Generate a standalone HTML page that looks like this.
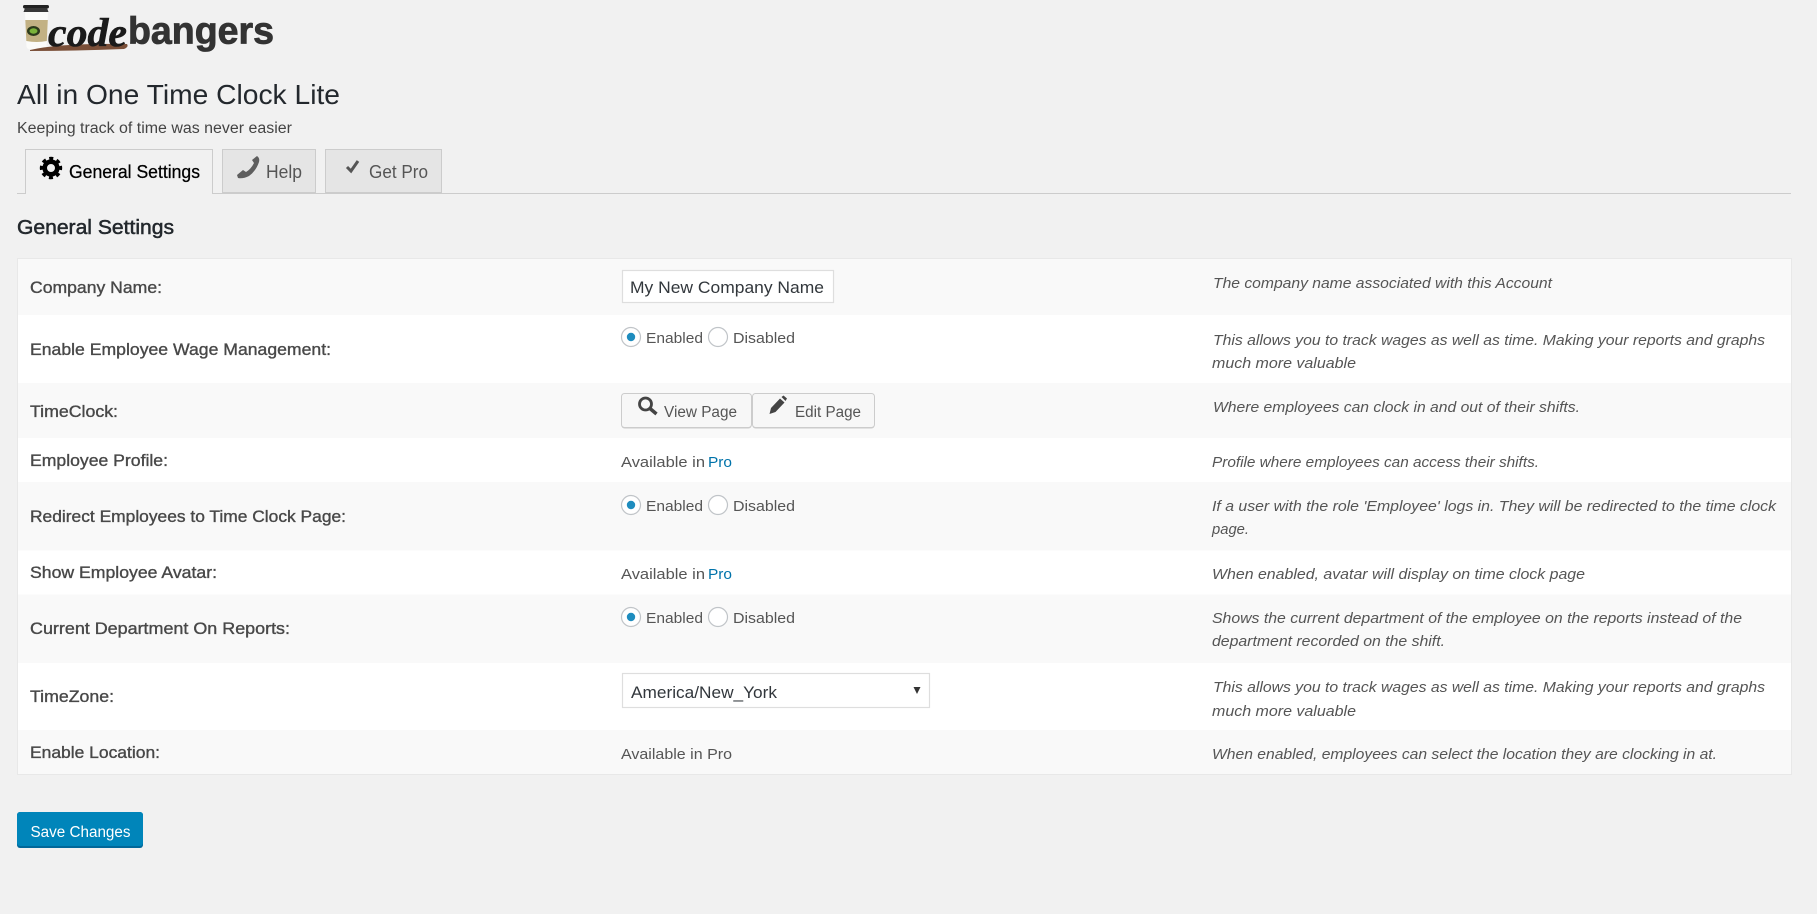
<!DOCTYPE html>
<html lang="en"><head><meta charset="utf-8"><title>All in One Time Clock Lite</title>
<style>
html,body{margin:0;padding:0;background:#f1f1f1;width:1817px;height:914px;overflow:hidden}
svg{display:block}
text{font-family:"Liberation Sans",sans-serif;font-size:15.6px;fill:#555;white-space:pre}
.l{fill:#484848;stroke:#484848;stroke-width:.35;font-size:16.2px}
.d{font-style:italic;font-size:15.2px}
.v{font-size:15.2px}
</style></head><body>
<svg width="1817" height="914" viewBox="0 0 1817 914" xmlns="http://www.w3.org/2000/svg">
<rect width="1817" height="914" fill="#f1f1f1"/>

<!-- logo -->
<path d="M25 12h23l-1.500 35q-1 3-8 3h-4q-7 0-8-3z" fill="#fbfbf9"/>
<path d="M25.300 20h22.500l-1 21q-10 2-20.500 0z" fill="#c2b184"/>
<ellipse cx="33.500" cy="31" rx="6.500" ry="5" fill="#2c3a1c"/><ellipse cx="33.500" cy="31" rx="4" ry="2.700" fill="#7ab33a"/>
<rect x="23" y="5" width="26" height="3.500" rx="1.700" fill="#222"/><path d="M25 8h22l1.500 4h-25z" fill="#383838"/>
<path d="M30 50q30-7 97-6q2 3-3 5q-50 2-94 2z" fill="#7a4f38"/>
<text x="48" y="46" textLength="79" lengthAdjust="spacingAndGlyphs" style="font-family:'Liberation Serif',serif;font-size:40px;font-style:italic;font-weight:bold;fill:#1a1a1a;stroke:#1a1a1a;stroke-width:.6">code</text>
<text x="128" y="43.500" textLength="146" lengthAdjust="spacingAndGlyphs" style="font-size:38px;font-weight:bold;fill:#333;stroke:#333;stroke-width:.8">bangers</text>

<!-- header -->
<text x="17" y="104" textLength="323" lengthAdjust="spacingAndGlyphs" style="font-size:28px;fill:#23282d">All in One Time Clock Lite</text>
<text x="17" y="133" textLength="275" lengthAdjust="spacingAndGlyphs" style="font-size:15.5px;fill:#444">Keeping track of time was never easier</text>

<!-- tabs -->
<rect x="17" y="193" width="1774" height="1" fill="#ccc"/>
<path d="M25.500 194V149.500H212.500V194" fill="#f1f1f1" stroke="#ccc"/>
<rect x="26" y="192" width="186" height="3" fill="#f1f1f1"/>
<rect x="222.500" y="149.500" width="93" height="43" fill="#e5e5e5" stroke="#ccc"/>
<rect x="325.500" y="149.500" width="116" height="43" fill="#e5e5e5" stroke="#ccc"/>

<g fill="none" stroke="#000">
<circle cx="51" cy="168" r="6.300" stroke-width="4.600"/>
<circle cx="51" cy="168" r="9.500" stroke-width="3.400" stroke-dasharray="3.900 3.560" transform="rotate(-12 51 168)"/>
</g>
<text x="69" y="178" textLength="131" lengthAdjust="spacingAndGlyphs" style="font-size:18px;fill:#000;stroke:#000;stroke-width:.25">General Settings</text>

<path d="M237 175l6-5 3 2q5-3 8-9l-2-3 5-4q3 2 2 6q-3 9-10 14q-6 3-11 2z" fill="#5e5e5e"/>
<text x="266" y="178" textLength="36" lengthAdjust="spacingAndGlyphs" style="font-size:18px;fill:#555">Help</text>
<path d="M347 167l4 4 7-10" fill="none" stroke="#555" stroke-width="3"/>
<text x="369" y="178" textLength="59" lengthAdjust="spacingAndGlyphs" style="font-size:18px;fill:#555">Get Pro</text>

<text x="17" y="234" textLength="157" lengthAdjust="spacingAndGlyphs" style="font-size:20px;fill:#23282d;stroke:#23282d;stroke-width:.5">General Settings</text>

<!-- table -->
<rect x="17.500" y="258.500" width="1774" height="516" fill="#fff" stroke="#e8e8e8"/>
<rect x="18" y="259" width="1773" height="56" fill="#f9f9f9"/>
<rect x="18" y="383" width="1773" height="55" fill="#f9f9f9"/>
<rect x="18" y="482" width="1773" height="68.500" fill="#f9f9f9"/>
<rect x="18" y="594.500" width="1773" height="68.500" fill="#f9f9f9"/>
<rect x="18" y="730" width="1773" height="44" fill="#f9f9f9"/>

<!-- labels -->
<text class="l" x="30" y="293" textLength="132" lengthAdjust="spacingAndGlyphs">Company Name:</text>
<text class="l" x="30" y="355" textLength="301" lengthAdjust="spacingAndGlyphs">Enable Employee Wage Management:</text>
<text class="l" x="30" y="417" textLength="88" lengthAdjust="spacingAndGlyphs">TimeClock:</text>
<text class="l" x="30" y="466" textLength="138" lengthAdjust="spacingAndGlyphs">Employee Profile:</text>
<text class="l" x="30" y="522" textLength="316" lengthAdjust="spacingAndGlyphs">Redirect Employees to Time Clock Page:</text>
<text class="l" x="30" y="578" textLength="187" lengthAdjust="spacingAndGlyphs">Show Employee Avatar:</text>
<text class="l" x="30" y="634" textLength="260" lengthAdjust="spacingAndGlyphs">Current Department On Reports:</text>
<text class="l" x="30" y="702" textLength="84" lengthAdjust="spacingAndGlyphs">TimeZone:</text>
<text class="l" x="30" y="758" textLength="130" lengthAdjust="spacingAndGlyphs">Enable Location:</text>

<!-- company input -->
<rect x="622.500" y="270.500" width="211" height="32" fill="#fff" stroke="#dedede" stroke-width="1.200"/>
<text x="630" y="293" textLength="194" lengthAdjust="spacingAndGlyphs" style="font-size:16.500px;fill:#32373c">My New Company Name</text>

<!-- radios 1 -->
<g>
<circle cx="631" cy="337" r="9.500" fill="#fff" stroke="#c0c4c8" stroke-width="1.200"/><circle cx="631" cy="337" r="4.200" fill="#1e8cbe"/>
<text class="v" x="646" y="343" textLength="57" lengthAdjust="spacingAndGlyphs">Enabled</text>
<circle cx="718" cy="337" r="9.500" fill="#fff" stroke="#c0c4c8" stroke-width="1.200"/>
<text class="v" x="733" y="343" textLength="62" lengthAdjust="spacingAndGlyphs">Disabled</text>
</g>
<!-- radios 2 -->
<g>
<circle cx="631" cy="505" r="9.500" fill="#fff" stroke="#c0c4c8" stroke-width="1.200"/><circle cx="631" cy="505" r="4.200" fill="#1e8cbe"/>
<text class="v" x="646" y="511" textLength="57" lengthAdjust="spacingAndGlyphs">Enabled</text>
<circle cx="718" cy="505" r="9.500" fill="#fff" stroke="#c0c4c8" stroke-width="1.200"/>
<text class="v" x="733" y="511" textLength="62" lengthAdjust="spacingAndGlyphs">Disabled</text>
</g>
<!-- radios 3 -->
<g>
<circle cx="631" cy="617" r="9.500" fill="#fff" stroke="#c0c4c8" stroke-width="1.200"/><circle cx="631" cy="617" r="4.200" fill="#1e8cbe"/>
<text class="v" x="646" y="623" textLength="57" lengthAdjust="spacingAndGlyphs">Enabled</text>
<circle cx="718" cy="617" r="9.500" fill="#fff" stroke="#c0c4c8" stroke-width="1.200"/>
<text class="v" x="733" y="623" textLength="62" lengthAdjust="spacingAndGlyphs">Disabled</text>
</g>

<!-- buttons -->
<rect x="621.500" y="393.500" width="130" height="35" rx="3" fill="#ccc"/>
<rect x="621.500" y="393.500" width="130" height="34" rx="3" fill="#f7f7f7" stroke="#ccc"/>
<rect x="752.500" y="393.500" width="122" height="35" rx="3" fill="#ccc"/>
<rect x="752.500" y="393.500" width="122" height="34" rx="3" fill="#f7f7f7" stroke="#ccc"/>
<circle cx="645.500" cy="404" r="6" fill="none" stroke="#444" stroke-width="2.800"/>
<path d="M650 408.500l6.500 5.500" stroke="#444" stroke-width="3.500" fill="none"/>
<text x="664" y="417" textLength="73" lengthAdjust="spacingAndGlyphs" style="font-size:15.500px">View Page</text>
<path d="M769.500 414l1.500-6 9-9.500 4.500 4-9 9.500zM781.500 397l2-1.500 3.500 3-1.500 2.500z" fill="#444"/>
<text x="795" y="417" textLength="66" lengthAdjust="spacingAndGlyphs" style="font-size:15.500px">Edit Page</text>

<!-- available -->
<text class="v" x="621" y="467" textLength="84" lengthAdjust="spacingAndGlyphs">Available in</text>
<text class="v" x="708" y="467" textLength="24" lengthAdjust="spacingAndGlyphs" style="fill:#0073aa">Pro</text>
<text class="v" x="621" y="579" textLength="84" lengthAdjust="spacingAndGlyphs">Available in</text>
<text class="v" x="708" y="579" textLength="24" lengthAdjust="spacingAndGlyphs" style="fill:#0073aa">Pro</text>
<text class="v" x="621" y="759" textLength="111" lengthAdjust="spacingAndGlyphs">Available in Pro</text>

<!-- select -->
<rect x="622.500" y="673.500" width="307" height="34" fill="#fff" stroke="#dedede" stroke-width="1.200"/>
<text x="631" y="698" textLength="146" lengthAdjust="spacingAndGlyphs" style="font-size:17px;fill:#32373c">America/New_York</text>
<path d="M913.500 687h7l-3.500 7z" fill="#333"/>

<!-- descriptions -->
<text class="d" x="1213" y="288" textLength="339" lengthAdjust="spacingAndGlyphs">The company name associated with this Account</text>
<text class="d" x="1213" y="345" textLength="552" lengthAdjust="spacingAndGlyphs">This allows you to track wages as well as time. Making your reports and graphs</text>
<text class="d" x="1212" y="368" textLength="144" lengthAdjust="spacingAndGlyphs">much more valuable</text>
<text class="d" x="1213" y="412" textLength="367" lengthAdjust="spacingAndGlyphs">Where employees can clock in and out of their shifts.</text>
<text class="d" x="1212" y="467" textLength="327" lengthAdjust="spacingAndGlyphs">Profile where employees can access their shifts.</text>
<text class="d" x="1212" y="511" textLength="564" lengthAdjust="spacingAndGlyphs">If a user with the role 'Employee' logs in. They will be redirected to the time clock</text>
<text class="d" x="1212" y="534" textLength="37" lengthAdjust="spacingAndGlyphs">page.</text>
<text class="d" x="1212" y="579" textLength="373" lengthAdjust="spacingAndGlyphs">When enabled, avatar will display on time clock page</text>
<text class="d" x="1212" y="623" textLength="530" lengthAdjust="spacingAndGlyphs">Shows the current department of the employee on the reports instead of the</text>
<text class="d" x="1212" y="646" textLength="233" lengthAdjust="spacingAndGlyphs">department recorded on the shift.</text>
<text class="d" x="1213" y="692" textLength="552" lengthAdjust="spacingAndGlyphs">This allows you to track wages as well as time. Making your reports and graphs</text>
<text class="d" x="1212" y="716" textLength="144" lengthAdjust="spacingAndGlyphs">much more valuable</text>
<text class="d" x="1212" y="759" textLength="505" lengthAdjust="spacingAndGlyphs">When enabled, employees can select the location they are clocking in at.</text>

<!-- save -->
<rect x="17" y="812" width="126" height="36" rx="3" fill="#006799"/>
<rect x="17" y="812" width="126" height="34" rx="3" fill="#0085ba"/>
<text x="30.500" y="837" textLength="100" lengthAdjust="spacingAndGlyphs" style="font-size:15.500px;fill:#fff">Save Changes</text>
</svg>
</body></html>
